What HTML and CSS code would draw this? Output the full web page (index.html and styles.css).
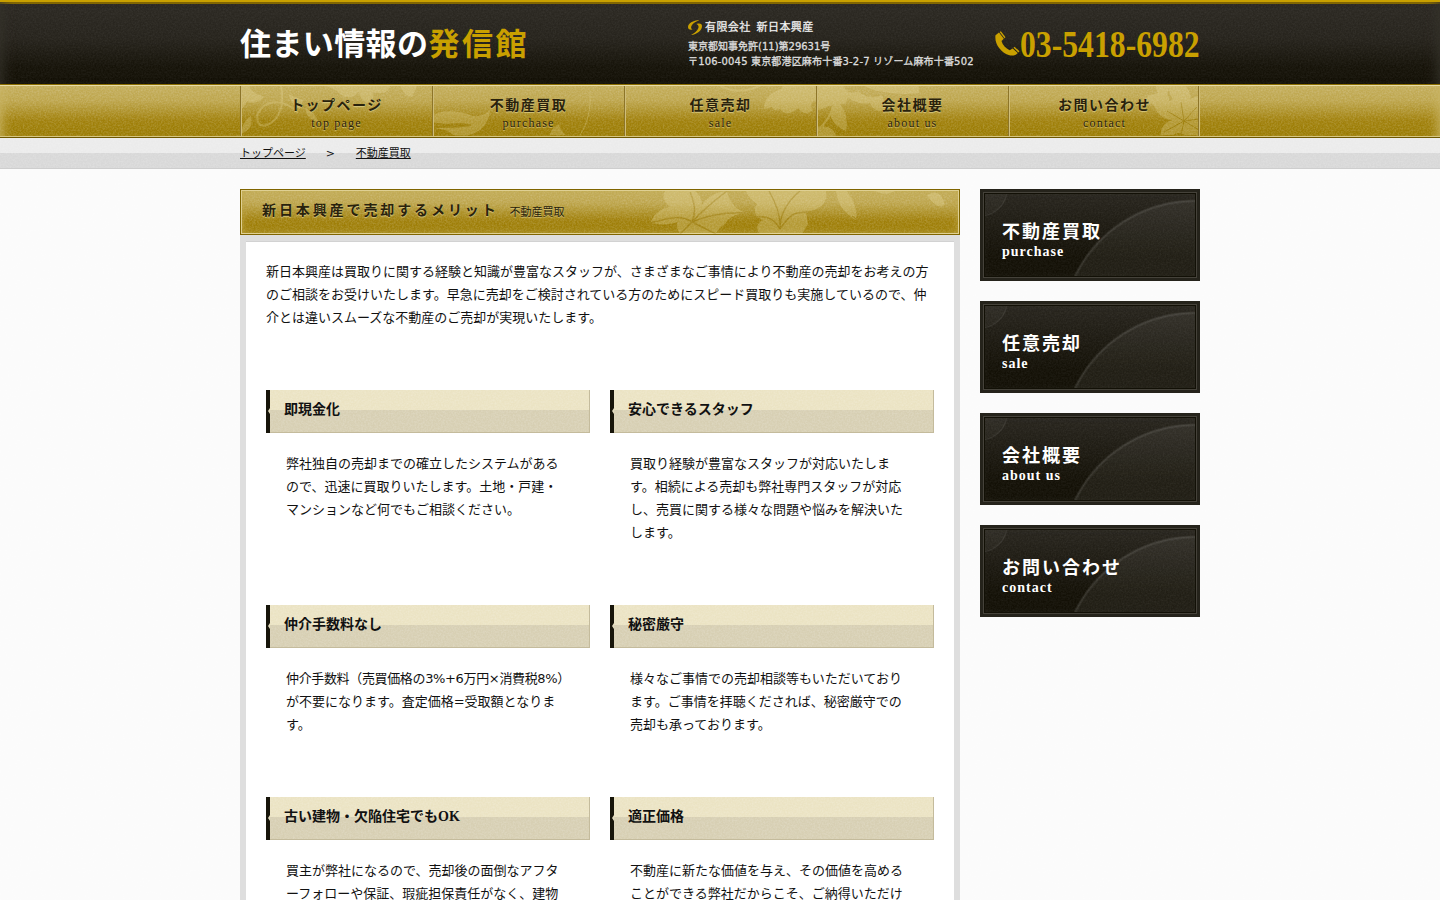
FILE: index.html
```html
<!DOCTYPE html>
<html lang="ja">
<head>
    <meta charset="UTF-8">
    <title>住まい情報の発信館</title>
    <link rel="stylesheet" href="styles.css">
</head>
<body>
    <!-- Header -->
    <header class="header">
        <div class="inner header-inner">
            <h1 class="logo">住まい情報の<span>発信館</span></h1>
            <div class="company">
                <p class="company-name">
                    <svg width="14" height="15" viewBox="0 0 14 15" fill="#c9a000">
                        <path d="M11.500 0C5 .4 0 3.500 0 7c0 2.300 2 3 4.600 2.500C2.800 8.600 2.600 7 4 5 5.500 3 8 1.500 11.500 0z"/>
                        <path d="M3 15c6-.6 11-4.500 11-9 0-2.400-2.600-3-5.400-2C10.800 5 11.200 7 9.800 9.300 8.200 11.900 6 13.500 3 15z"/>
                    </svg>
                    <span>有限会社</span><span>新日本興産</span>
                </p>
                <p>東京都知事免許(11)第29631号</p>
                <p class="address">〒106-0045 東京都港区麻布十番3-2-7 リゾーム麻布十番502</p>
            </div>
            <div class="tel">
                <svg width="25" height="26" viewBox="0 0 25 26" fill="#c9a000">
                    <path d="M.5 4.200L4 1.600l4.800 6.100L6.500 10c1.200 4.200 4.200 7.300 8.200 9.200l3-1.800 5 4.500c-2.200 2.800-5.500 3.300-9 2.100C6 21.300-.8 13 .5 4.200z"/>
                    <path d="M4.700 1.100l1.200-.8 4.600 6-1 .9zM18.500 16.800l1-1 5 4.400-1.100 1.200z"/>
                </svg>
                <span>03-5418-6982</span>
            </div>
        </div>
    </header>

    <!-- Global navigation -->
    <nav class="nav">
        <div class="inner nav-inner">
            <svg class="nav-flowers" width="960" height="50" viewBox="0 0 960 50" fill="#efe3ad">
                <g fill="none" stroke="#efe3ad">
                    <path d="M41 0c4 20-2 34-14 39-10 3-13-8-6-16C29 13 46 14 58 27" stroke-width="2"/>
                    <path d="M340 49c8-12 11-28 10-42" stroke-width="1"/>
                    <path d="M480 0c12 6 26 6 40 0M577 44c8-6 14-14 16-24" stroke-width="2"/>
                </g>
                <path d="M1 0h8c2 5 6 8 15 11-6 6-13 7-17 4C5 20 3 22 1 23zM1 45c2-6 3-10 10-15 0 8 3 12-10 18zM48 8l15 6-3 9c-6-2-8-7-12-15zM65 22c7 3 12 8 14 15-9-3-13-8-14-15zM85 0h65c-1 7-8 8-18 6 4 6 0 9-5 11-5-3-8-7-8-12-3 5-7 7-12 6-7 0-5-6-22-11zM160 0h17l-5 11c-6-1-9-5-12-11z"/>
                <path d="M193 29c14-7 30-3 40 1 9 1 14-3 17-6-2 19-15 28-37 25-4-4-9-6-20-7 17-1 29 1 39-3-13-4-26 1-39-3zM310 49c1-5 4-8 9-11 1 5 3 8 7 11z"/>
                <path d="M543 0h34v13c-6 3-8 7-4 10-5 8-12 3-15-1-6 7-14 7-18 1-5 2-9 1-8-4-3 0-5-1-6-4 7-2 14-8 17-15zM524 23c0-11 7-18 23-22-1 11-6 19-23 22zM577 0h27c2 6 8 9 14 5 4 5 15 8 24 4 2 6 4 9 8 11-5 8-17 6-20-3-8 2-17-1-22-6-1 6-4 8-8 7 6 9 8 17 6 27-15-7-18-16-13-26-6 1-9 4-15 5zM577 42c9-4 17 0 19 8h-19zM624 0h55v7c-13 2-40 1-55-7z"/>
                <path d="M917 7c7-2 12 0 12 8 10-3 12 4 11 10 4-7 10-14 19-15v39h-14c-5-3-9-2-12 0h-12c-1-7 4-13 11-15-10-1-15-7-18-14l-9-8c4-1 7-3 12-5zM905 15c2-7 7-8 12-5l-7 9zM916 0h12c2 5-1 9-5 10-5-1-7-5-7-10zM928 0h18c7 9 5 19-3 26-8-5-12-14-15-26z"/>
                <path d="M944 35l-17-10M944 35l-3-19M944 35l13-14M944 35l-20 11M944 35l15 9M944 35l-3 14M944 35l15-2" fill="none" stroke="#9b7e10" stroke-width="1"/>
            </svg>
            <a class="nav-item" href="#">トップページ<small>top page</small></a>
            <a class="nav-item" href="#">不動産買取<small>purchase</small></a>
            <a class="nav-item" href="#">任意売却<small>sale</small></a>
            <a class="nav-item" href="#">会社概要<small>about us</small></a>
            <a class="nav-item" href="#">お問い合わせ<small>contact</small></a>
        </div>
    </nav>

    <!-- Breadcrumb -->
    <div class="breadcrumb">
        <div class="inner breadcrumb-inner">
            <a href="#">トップページ</a>
            <span>&gt;</span>
            <a href="#">不動産買取</a>
        </div>
    </div>

    <div class="inner content">
        <main class="main">
            <h2 class="title">
                <svg class="title-flowers" width="330" height="43" viewBox="0 0 330 43" fill="#efe3ad">
                    <path d="M20 32c5-10 10-14 20-16-6-5-8-10-5-16h30c5 4 7 9 7 14C78 5 86 1 97 0c1 9 8 18 19 22-11 1-18 5-20 10-5 4-9 7-10 11H50c-3-5-4-9-2-12-9 3-18 3-28 1z"/>
                    <path d="M116 0h80c2 10-4 19-20 20l2 13-6 10h-42c-4-5-4-10 3-14-9-4-10-10-6-16-5-4-9-7-11-13zM206 0h11c5 8 11 17 9 29-9-5-18-13-20-29zM245 0h20c-6 3-12 4-20 0zM297 5c5-6 15-5 18 9-7 4-12-2-18-9z"/>
                    <path d="M62 31c4-10 3-18-2-30M62 31c-10-7-20-5-42 1M62 31c10-11 18-18 35-31M62 31c14-6 30-10 54-9M62 31l24 12M62 31L50 43M150 38c1-13-3-24-11-38M150 38c0-15 8-28 20-38M150 38c-6-10-12-13-23-12M150 38c10-15 14-17 28-17M190 28l18 14M222 25l17 12" fill="none" stroke="#ad9134" stroke-width="1.500"/>
                </svg>
                <span>新日本興産で売却するメリット</span><small>不動産買取</small>
            </h2>
            <div class="panel">
                <p class="intro">新日本興産は買取りに関する経験と知識が豊富なスタッフが、さまざまなご事情により不動産の売却をお考えの方のご相談をお受けいたします。早急に売却をご検討されている方のためにスピード買取りも実施しているので、仲介とは違いスムーズな不動産のご売却が実現いたします。</p>
                <div class="merits">
                    <section>
                        <h3>即現金化</h3>
                        <p>弊社独自の売却までの確立したシステムがあるので、迅速に買取りいたします。土地・戸建・マンションなど何でもご相談ください。</p>
                    </section>
                    <section>
                        <h3>安心できるスタッフ</h3>
                        <p>買取り経験が豊富なスタッフが対応いたします。相続による売却も弊社専門スタッフが対応し、売買に関する様々な問題や悩みを解決いたします。</p>
                    </section>
                    <section>
                        <h3>仲介手数料なし</h3>
                        <p><span class="nowrap">仲介手数料（売買価格の3%+6万円×消費税8%）</span><br>が不要になります。査定価格=受取額となります。</p>
                    </section>
                    <section>
                        <h3>秘密厳守</h3>
                        <p>様々なご事情での売却相談等もいただいております。ご事情を拝聴くだされば、秘密厳守での売却も承っております。</p>
                    </section>
                    <section>
                        <h3>古い建物・欠陥住宅でもOK</h3>
                        <p>買主が弊社になるので、売却後の面倒なアフタ<br>ーフォローや保証、瑕疵担保責任がなく、建物</p>
                    </section>
                    <section>
                        <h3>適正価格</h3>
                        <p>不動産に新たな価値を与え、その価値を高めることができる弊社だからこそ、ご納得いただけ</p>
                    </section>
                </div>
            </div>
        </main>

        <!-- Side banners -->
        <aside class="side">
            <a class="banner" href="#">不動産買取<small>purchase</small></a>
            <a class="banner" href="#">任意売却<small>sale</small></a>
            <a class="banner" href="#">会社概要<small>about us</small></a>
            <a class="banner" href="#">お問い合わせ<small>contact</small></a>
        </aside>
    </div>
</body>
</html>
```

FILE: styles.css
```css
/* Paper grain: --grain for light and gold surfaces, --grain-dark for black ones */
:root {
    --grain: url("data:image/svg+xml,%3Csvg xmlns='http://www.w3.org/2000/svg' width='160' height='160'%3E%3Cfilter id='n' x='0' y='0' width='100%25' height='100%25'%3E%3CfeTurbulence type='fractalNoise' baseFrequency='.6' numOctaves='2' stitchTiles='stitch'/%3E%3CfeColorMatrix values='0 0 0 0 1 0 0 0 0 1 0 0 0 0 1 .35 0 0 0 -.12'/%3E%3C/filter%3E%3Crect width='160' height='160' filter='url(%23n)'/%3E%3C/svg%3E");
    --grain-dark: url("data:image/svg+xml,%3Csvg xmlns='http://www.w3.org/2000/svg' width='160' height='160'%3E%3Cfilter id='n' x='0' y='0' width='100%25' height='100%25'%3E%3CfeTurbulence type='fractalNoise' baseFrequency='.6' numOctaves='2' stitchTiles='stitch'/%3E%3CfeColorMatrix values='0 0 0 0 1 0 0 0 0 1 0 0 0 0 1 .1 0 0 0 -.03'/%3E%3C/filter%3E%3Crect width='160' height='160' filter='url(%23n)'/%3E%3C/svg%3E");
    --serif: "Liberation Serif", "Noto Sans CJK JP", serif;
    --gold: linear-gradient(#c4ae5c 0%, #bda54c 30%, #a1810c 68%, #997a00 100%);
}

* {
    box-sizing: border-box;
}

body {
    margin: 0;
    height: 900px;
    overflow: hidden;
    background: var(--grain) #fbfbfb;
    color: #111;
    font-family: "DejaVu Sans", "Noto Sans CJK JP", sans-serif;
    font-size: 13px;
    line-height: 23px;
}

h1, h2, h3, p {
    margin: 0;
}

a {
    color: inherit;
    text-decoration: none;
}

.nowrap {
    letter-spacing: -0.35px;
    white-space: nowrap;
}

.inner {
    width: 960px;
    margin: 0 auto;
}

/* Header */
.header {
    height: 84px;
    border-top: 2px solid #c9a000;
    background: linear-gradient(#8a6d00 2px, transparent 2px), var(--grain-dark), linear-gradient(#2c2923, #26231c 45%, #151208 80%, #131006);
    box-shadow: inset 12px 0 14px -10px #36332b, inset -12px 0 14px -10px #36332b;
}

.header-inner {
    display: flex;
    height: 82px;
}

.logo {
    width: 448px;
    padding-top: 20px;
    color: #fff;
    font: bold 31px/46px var(--serif);
    letter-spacing: 0.4px;
    white-space: nowrap;
}

.logo span {
    color: #c9a000;
    letter-spacing: 2.5px;
}

.company {
    width: 307px;
    padding-top: 17px;
    color: #ddd;
    font-size: 10px;
    line-height: 15px;
    white-space: nowrap;
    -webkit-text-stroke: 0.3px #ddd;
}

.company-name {
    display: flex;
    align-items: center;
    gap: 6px;
    height: 20px;
    padding-bottom: 3px;
    color: #fff;
    font-size: 11px;
    letter-spacing: 0.4px;
}

.company-name svg {
    margin-right: -3px;
}

.address {
    letter-spacing: 0.17px;
}

.tel {
    display: flex;
    align-items: flex-start;
    width: 205px;
    padding-top: 18px;
    color: #c9a000;
    font: bold 38px/48px "Liberation Serif", serif;
    white-space: nowrap;
}

.tel svg {
    flex: none;
    margin-top: 11px;
}

/* Condensed figures */
.tel span {
    transform: scaleX(0.834);
    transform-origin: left;
}

/* Navigation */
.nav {
    height: 54px;
    border-top: 1px solid #8a6d00;
    border-bottom: 1px solid #6e5700;
    background: var(--grain), var(--gold);
    box-shadow: inset 0 1px #e8dca8, inset 0 -1px #d6c682, inset 10px 0 12px -8px #c9b464, inset -10px 0 12px -8px #c9b464;
}

.nav-inner {
    position: relative;
    display: flex;
    height: 52px;
    padding: 1px 0;
}

.nav-inner::after {
    content: "";
    position: absolute;
    top: 1px;
    right: 0;
    width: 2px;
    height: 50px;
    background: linear-gradient(90deg, #8d7529 50%, #cfbd79 50%);
}

.nav-flowers {
    position: absolute;
    left: 0;
    top: 1px;
    opacity: 0.25;
}

.nav-item {
    position: relative;
    flex: 1;
    padding-top: 10px;
    border-left: 1px solid #8d7529;
    box-shadow: inset 1px 0 #cfbd79;
    color: #29220c;
    font: bold 14px/20px var(--serif);
    letter-spacing: 1.5px;
    text-align: center;
    text-shadow: 0 1px 1px #d8c77d;
}

.nav-item small {
    display: block;
    font-size: 12px;
    font-weight: normal;
    line-height: 14px;
    letter-spacing: 1.2px;
}

/* Breadcrumb */
.breadcrumb {
    height: 31px;
    border-bottom: 1px solid #cecece;
    background: var(--grain), linear-gradient(#ebebeb 15px, #d8d8d8 15px);
}

.breadcrumb-inner {
    display: flex;
    padding-top: 1px;
    font-size: 11px;
    line-height: 30px;
}

.breadcrumb-inner a {
    text-decoration: underline;
    text-underline-offset: 1px;
}

.breadcrumb-inner span {
    width: 50px;
    padding-left: 20px;
}

/* Main column */
.content {
    display: flex;
    gap: 20px;
    padding-top: 20px;
}

.main {
    width: 720px;
}

.title {
    position: relative;
    display: flex;
    height: 46px;
    padding-left: 21px;
    border: 1px solid #806500;
    background: var(--grain), var(--gold);
    box-shadow: inset 0 0 0 1px #dfd093, inset 0 0 8px #c0a84c;
    color: #29220c;
    font: bold 14px/42px var(--serif);
    letter-spacing: 2.9px;
    text-shadow: 0 1px 1px #d8c77d;
}

.title span {
    position: relative;
}

.title small {
    margin-left: 11px;
    font-size: 11px;
    font-weight: normal;
    line-height: 44px;
    letter-spacing: 0;
}

.title-flowers {
    position: absolute;
    right: -1px;
    top: 1px;
    opacity: 0.27;
    overflow: hidden;
}

.panel {
    height: 665px;
    padding: 19px 20px 0;
    border: 6px solid #dedede;
    border-bottom: 0;
    background-color: #fff;
    box-shadow: inset 0 1px #d2d2d2;
}

.intro {
    margin-bottom: 61px;
}

.merits {
    display: grid;
    grid-template-columns: 324px 324px;
    gap: 61px 20px;
}

.merits h3 {
    position: relative;
    height: 43px;
    margin-bottom: 19px;
    padding-left: 14px;
    border-left: 4px solid #17150a;
    background: var(--grain), linear-gradient(#ebe3c3 20px, #d7cfb3 20px);
    box-shadow: inset -1px -1px #c4bb9c;
    font: bold 14px/39px var(--serif);
}

/* Small arrow cut out of the dark bar */
.merits h3::before {
    content: "";
    position: absolute;
    left: -2px;
    top: 18px;
    border: 3px solid transparent;
    border-left: 0;
    border-right: 2px solid #e4dcc0;
}

.merits p {
    width: 300px;
    padding-left: 20px;
}

/* Side banners */
.side {
    display: flex;
    flex-direction: column;
    gap: 20px;
    width: 220px;
}

.banner {
    height: 92px;
    padding: 31px 0 0 22px;
    background:
        var(--grain-dark),
        radial-gradient(circle at 0 0, rgba(255, 255, 255, 0.03) 26px, rgba(255, 255, 255, 0.09) 27px, transparent 28px),
        radial-gradient(circle at 215px 145px, rgba(255, 255, 255, 0.06) 131px, rgba(255, 255, 255, 0.15) 133px, transparent 135px),
        linear-gradient(#2a2720, #131006 75%);
    outline: 1px solid #45423a;
    outline-offset: -4px;
    box-shadow: inset 0 0 0 3px #25231b, inset 0 0 0 5px #121006, inset 0 0 10px #3b3830;
    color: #fff;
    font: bold 18px/24px var(--serif);
    letter-spacing: 2px;
}

.banner small {
    display: block;
    font-size: 14px;
    line-height: 15px;
    letter-spacing: 1px;
}
```
